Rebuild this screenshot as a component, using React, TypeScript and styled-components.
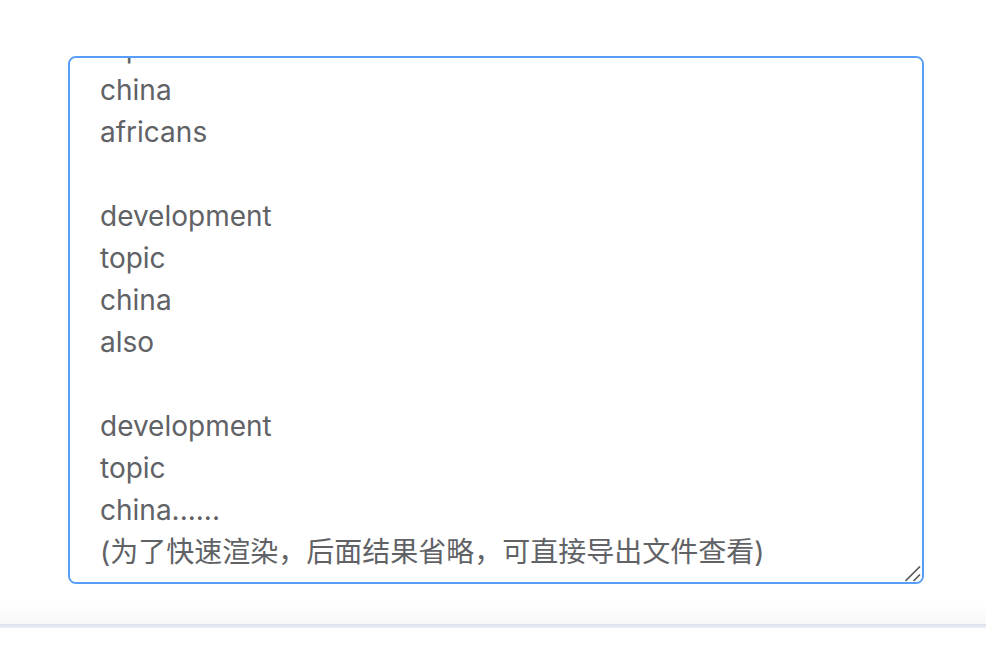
import { useLayoutEffect, useRef } from 'react';
import styled, { createGlobalStyle } from 'styled-components';

const GlobalStyle = createGlobalStyle`
  *, *::before, *::after { box-sizing: border-box; }
  body { margin: 0; background: #fff; }
`;

const Page = styled.main`
  display: flex;
  flex-direction: column;
`;

const Panel = styled.section`
  padding: 56px 62px 40px 68px;
  background: linear-gradient(to top, #f8f8f9, #fff 20px);
`;

const Divider = styled.hr`
  width: 100%;
  height: 4px;
  margin: 0;
  border: 0;
  border-top: 2px solid #e0e3ec;
  background: #eaecf5;
`;

const Field = styled.div`
  position: relative;
  display: flex;
`;

const ResultBox = styled.textarea`
  flex: 1;
  min-width: 0;
  height: 528px;
  padding: 9px 30px;
  border: 2px solid #589df8;
  border-radius: 8px;
  outline: none;
  background: #fff;
  color: #606266;
  font: 28px/42px Inter, "Noto Sans CJK SC", sans-serif;
  resize: vertical;

  &::-webkit-scrollbar {
    width: 0;
  }

  &::-webkit-resizer {
    background: transparent;
  }
`;

const Grip = styled.svg`
  position: absolute;
  right: 3px;
  bottom: 2px;
  width: 16px;
  height: 16px;
  pointer-events: none;
`;

const RESULT = [
  'development',
  'topic',
  'china',
  'africans',
  '',
  'development',
  'topic',
  'china',
  'also',
  '',
  'development',
  'topic',
  'china......',
  '(为了快速渲染，后面结果省略，可直接导出文件查看)',
].join('\n');

export default function App() {
  const box = useRef<HTMLTextAreaElement>(null);

  useLayoutEffect(() => {
    if (box.current) box.current.scrollTop = box.current.scrollHeight;
  }, []);

  return (
    <Page lang="zh-CN">
      <GlobalStyle />
      <Panel>
        <Field>
          <ResultBox ref={box} defaultValue={RESULT} aria-label="结果" spellCheck={false} />
          <Grip viewBox="0 0 16 16" fill="none" stroke="#5c5c5c" strokeWidth="1.7" aria-hidden="true">
            <path d="M0.5 15 15 0.5M8.5 15 15 8.5" />
          </Grip>
        </Field>
      </Panel>
      <Divider />
    </Page>
  );
}
